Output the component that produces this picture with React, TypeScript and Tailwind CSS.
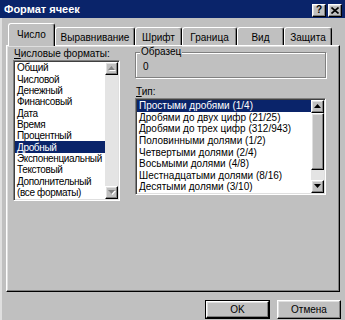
import type { ReactNode } from "react";

// Win2000-style 3D edges: raised for buttons/tabs, sunken for list boxes.
const raised =
  "border border-t-white border-l-white border-r-black border-b-black shadow-[inset_-1px_-1px_0_#808080,inset_1px_1px_0_#dfdfdf]";
const sunken =
  "border border-t-[#808080] border-l-[#808080] border-r-white border-b-white shadow-[inset_1px_1px_0_#404040,inset_-1px_-1px_0_#dfdfdf]";

const CATEGORIES = [
  "Общий",
  "Числовой",
  "Денежный",
  "Финансовый",
  "Дата",
  "Время",
  "Процентный",
  "Дробный",
  "Экспоненциальный",
  "Текстовый",
  "Дополнительный",
  "(все форматы)",
];

const TYPES = [
  "Простыми дробями (1/4)",
  "Дробями до двух цифр (21/25)",
  "Дробями до трех цифр (312/943)",
  "Половинными долями (1/2)",
  "Четвертыми долями (2/4)",
  "Восьмыми долями (4/8)",
  "Шестнадцатыми долями (8/16)",
  "Десятыми долями (3/10)",
];

const TABS = [
  { label: "Число", w: "w-[47px]", active: true },
  { label: "Выравнивание", w: "w-[80px]" },
  { label: "Шрифт", w: "w-[47px]" },
  { label: "Граница", w: "w-[55px]" },
  { label: "Вид", w: "w-[47px]" },
  { label: "Защита", w: "w-[48px]" },
];

function Arrow({ dir, disabled }: { dir: "up" | "down"; disabled?: boolean }) {
  const pts = dir === "up" ? "3.5,0 7,4 0,4" : "0,0 7,0 3.5,4";
  const shadow = dir === "up" ? "4.5,1 8,5 1,5" : "1,1 8,1 4.5,5";
  return (
    <svg width="8" height="5" viewBox="0 0 8 5" aria-hidden>
      {disabled && <polygon points={shadow} fill="#fff" />}
      <polygon points={pts} fill={disabled ? "#808080" : "#000"} />
    </svg>
  );
}

function ScrollButton({ dir, disabled }: { dir: "up" | "down"; disabled?: boolean }) {
  return (
    <div className={`${raised} flex h-[13px] w-[13px] shrink-0 items-center justify-center bg-[#c0c0c0]`}>
      <Arrow dir={dir} disabled={disabled} />
    </div>
  );
}

function Accel({ first, rest }: { first: string; rest: string }) {
  return (
    <span>
      <span className="underline underline-offset-1">{first}</span>
      {rest}
    </span>
  );
}

function ListRow({ children, selected, h }: { children: ReactNode; selected?: boolean; h: string }) {
  return (
    <div
      className={`${h} flex items-center whitespace-nowrap pl-[2px] ${
        selected ? "bg-[#0a246a] text-white" : ""
      }`}
    >
      {children}
    </div>
  );
}

function TitleBar() {
  return (
    <div className="flex h-[18px] shrink-0 items-center bg-[#0a246a] pl-[4px] pr-[3px]">
      <span className="text-[11px] font-bold text-white">Формат ячеек</span>
      <div className="ml-auto mt-[2px] flex gap-[2px]">
        <div className={`${raised} flex h-[13px] w-[14px] items-center justify-center bg-[#c0c0c0] text-[10px] font-bold leading-none`}>
          ?
        </div>
        <div className={`${raised} flex h-[13px] w-[14px] items-center justify-center bg-[#c0c0c0]`}>
          <svg width="8" height="7" viewBox="0 0 8 7" aria-hidden>
            <path d="M0.5 0.5 L7.5 6.5 M7.5 0.5 L0.5 6.5" stroke="#000" strokeWidth="1.6" />
          </svg>
        </div>
      </div>
    </div>
  );
}

function Tabs() {
  return (
    <div className="flex h-[27px] shrink-0 items-end pl-[2px]">
      {TABS.map((t) =>
        t.active ? (
          <div
            key={t.label}
            className={`${t.w} relative z-10 -mb-[1px] flex h-[23px] items-center justify-center rounded-t-[3px] border-l border-t border-r border-l-white border-t-white border-r-black bg-[#c0c0c0] pb-[2px] shadow-[inset_-1px_0_0_#808080]`}
          >
            {t.label}
          </div>
        ) : (
          <div
            key={t.label}
            className={`${t.w} flex h-[18px] items-center justify-center rounded-t-[3px] border-l border-t border-r border-l-white border-t-white border-r-black pt-[1px] shadow-[inset_-1px_0_0_#808080]`}
          >
            {t.label}
          </div>
        ),
      )}
    </div>
  );
}

function CategoryList() {
  return (
    <div className={`${sunken} flex h-[141px] w-[107px] bg-white p-[1px]`}>
      <div className="flex min-w-0 flex-1 flex-col overflow-hidden tracking-[-0.35px]">
        {CATEGORIES.map((c) => (
          <ListRow key={c} h="h-[11.35px]" selected={c === "Дробный"}>
            {c}
          </ListRow>
        ))}
      </div>
      <div className="flex w-[13px] flex-col">
        <ScrollButton dir="up" disabled />
        <div className="flex-1 bg-[#e4e4e4]" />
        <ScrollButton dir="down" disabled />
      </div>
    </div>
  );
}

function TypeList() {
  return (
    <div className={`${sunken} flex h-[97px] w-[191px] bg-white p-[1px]`}>
      <div className="flex min-w-0 flex-1 flex-col overflow-hidden">
        {TYPES.map((t, i) => (
          <ListRow key={t} h="h-[11.6px]" selected={i === 0}>
            {t}
          </ListRow>
        ))}
      </div>
      <div className="flex w-[13px] flex-col">
        <ScrollButton dir="up" />
        <div className={`${raised} h-[57px] bg-[#c0c0c0]`} />
        <div className="flex-1 bg-[#e4e4e4]" />
        <ScrollButton dir="down" />
      </div>
    </div>
  );
}

function Panel() {
  return (
    <div className="flex h-[247px] shrink-0 border border-l-white border-t-white border-r-black border-b-black pl-[6px] pt-[2px] shadow-[inset_-1px_-1px_0_#808080,inset_1px_1px_0_#dfdfdf]">
      <div className="flex flex-col">
        <div className="h-[12px] pl-[1px] leading-[12px]">
          <Accel first="Ч" rest="исловые форматы:" />
        </div>
        <div>
          <CategoryList />
        </div>
      </div>

      <div className="ml-[15px] flex flex-col pt-[4px]">
        <div className="relative flex h-[26px] w-[191px] items-center border border-[#808080] pl-[7px] pt-[2px] shadow-[inset_1px_1px_0_#fff,1px_1px_0_#fff]">
          <span className="absolute -top-[7px] left-[4px] bg-[#c0c0c0] px-[1px] leading-[12px]">Образец</span>
          0
        </div>
        <div className="mt-[8px] h-[12px] pl-[1px] leading-[12px]">
          <Accel first="Т" rest="ип:" />
        </div>
        <TypeList />
      </div>
    </div>
  );
}

function DialogButton({ children, isDefault, w }: { children: ReactNode; isDefault?: boolean; w: string }) {
  const face = (
    <div className={`${raised} flex h-full w-full items-center justify-center bg-[#c0c0c0]`}>{children}</div>
  );
  return (
    <div className={`${w} h-[19px] ${isDefault ? "border border-black" : ""}`}>{face}</div>
  );
}

export default function App() {
  return (
    <div className="flex h-[320px] w-[345px] flex-col overflow-hidden bg-[#c0c0c0] font-['Liberation_Sans',Arial,sans-serif] text-[10px] text-black">
      <TitleBar />
      <div className="flex flex-1 flex-col border-l-2 border-l-[#dfdfdf] pl-[4px] pr-[5px]">
        <Tabs />
        <Panel />
        <div className="-mr-[1px] flex justify-end gap-[7px] pt-[8px]">
          <DialogButton isDefault w="w-[65px]">
            OK
          </DialogButton>
          <DialogButton w="w-[64px]">Отмена</DialogButton>
        </div>
      </div>
    </div>
  );
}
